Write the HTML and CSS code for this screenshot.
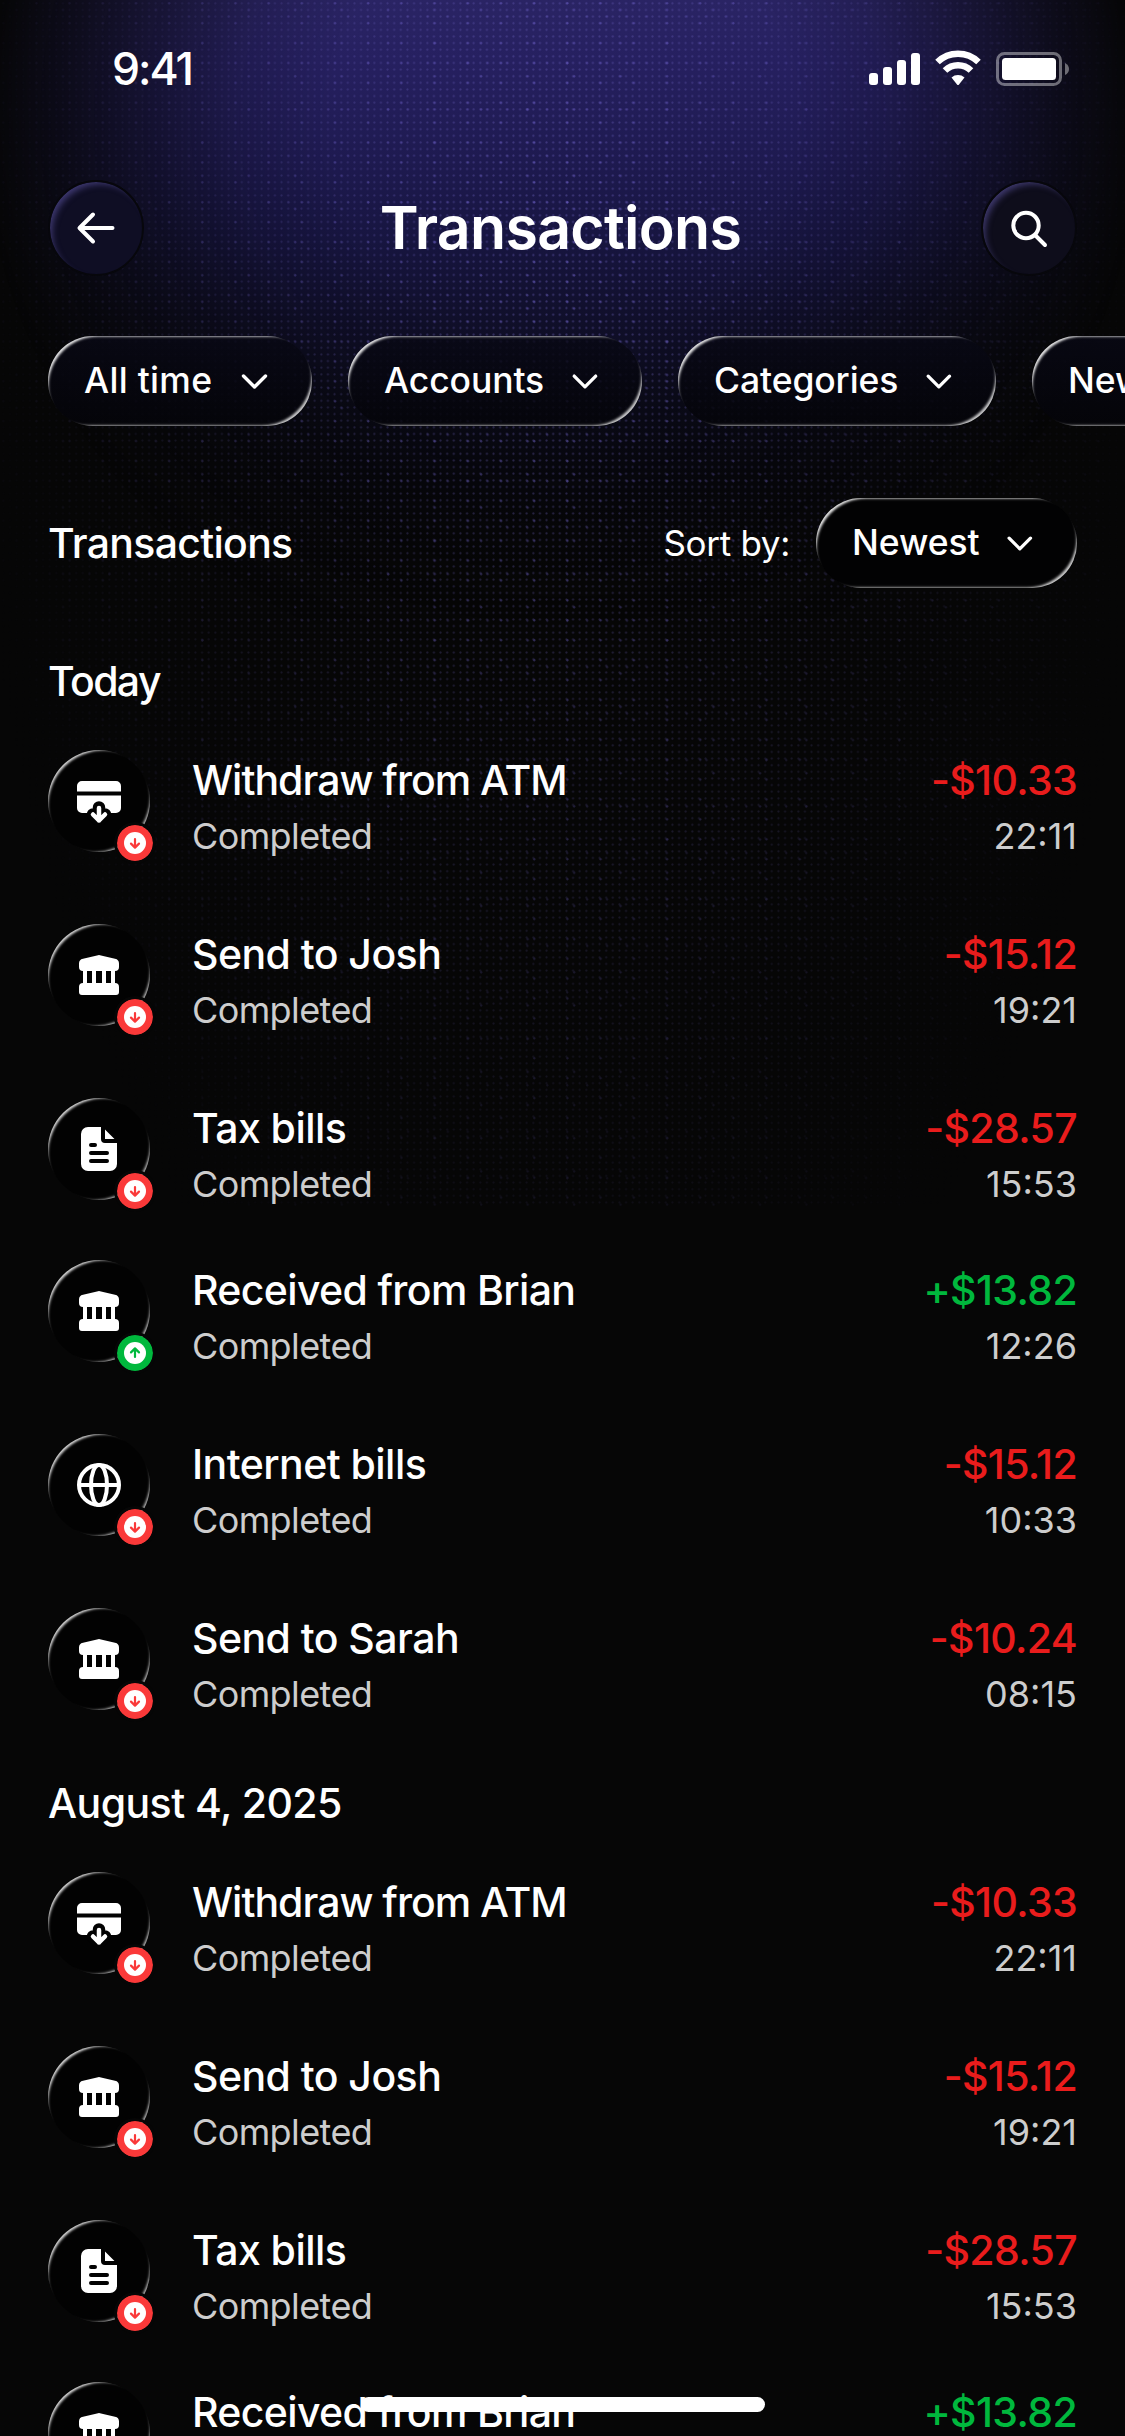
FILE: index.html
```html
<!DOCTYPE html>
<html lang="en">
<head>
<meta charset="utf-8">
<title>Transactions</title>
<link rel="stylesheet" href="styles.css">
</head>
<body>
<svg class="sprite" aria-hidden="true">
  <symbol id="chevron" viewBox="0 0 48 48"><path d="M12.500 19l11 11 11-11" fill="none" stroke="#fff" stroke-width="3.4" stroke-linecap="round" stroke-linejoin="round"/></symbol>
  <symbol id="atm" viewBox="0 0 48 48"><path fill="#fff" d="M2 14.500V9a5 5 0 0 1 5-5h34a5 5 0 0 1 5 5v5.500zM2 18.500h44V31a5 5 0 0 1-5 5H7a5 5 0 0 1-5-5z"/><g fill="none" stroke-linecap="round" stroke-linejoin="round"><path d="M24 30.500v13M18 37.500l6 6 6-6" stroke="#020202" stroke-width="12.500"/><path d="M24 31v12.500M18 37.500l6 6 6-6" stroke="#fff" stroke-width="4.500"/></g></symbol>
  <symbol id="bank" viewBox="0 0 48 48"><path fill="#fff" d="M22 4.400q2-.6 4 0l14 3.300a5 5 0 0 1 4 5V16a4 4 0 0 1-4 4v12a4 4 0 0 1 4 4v5a3 3 0 0 1-3 3H7a3 3 0 0 1-3-3v-5a4 4 0 0 1 4-4V20a4 4 0 0 1-4-4v-3.300a5 5 0 0 1 4-5zM12 20v12h5V20zm9 0v12h6V20zm10 0v12h5V20z"/></symbol>
  <symbol id="doc" viewBox="0 0 48 48"><path fill="#fff" d="M13 2h13v12a4 4 0 0 0 4 4h12v21a7 7 0 0 1-7 7H13a7 7 0 0 1-7-7V9a7 7 0 0 1 7-7zM30 4.500l9.500 9.500H30z"/><path d="M16 20h4M16 28h16M16 36h16" stroke="#020202" stroke-width="4" stroke-linecap="round"/></symbol>
  <symbol id="globe" viewBox="0 0 48 48"><g fill="none" stroke="#fff" stroke-width="4"><circle cx="24" cy="24" r="20"/><ellipse cx="24" cy="24" rx="8" ry="20"/><path d="M4 24h40"/></g></symbol>
  <symbol id="arrow" viewBox="0 0 36 36"><circle cx="18" cy="18" r="18" fill="currentColor"/><circle cx="18" cy="18" r="11" fill="#fff"/><path d="M18 14v8.500M14 18.600l4 4 4-4" fill="none" stroke="currentColor" stroke-width="2.200" stroke-linecap="round" stroke-linejoin="round"/></symbol>
</svg>
<main class="screen">
  <header class="status">
    <span class="time">9:41</span>
    <svg class="status-icons" width="202" height="40" viewBox="0 0 202 40">
      <g fill="#fff"><rect x="0" y="24" width="9" height="12" rx="3"/><rect x="14" y="18" width="9" height="18" rx="3"/><rect x="28" y="11" width="9" height="25" rx="3"/><rect x="42" y="4" width="9" height="32" rx="3"/></g>
      <g fill="none" stroke="#fff" stroke-width="6.500"><path d="M68.500 13a29.500 29.500 0 0 1 41 0"/><path d="M76 21.500a18.500 18.500 0 0 1 26 0"/></g>
      <path fill="#fff" d="M82.500 28.500a10 10 0 0 1 13 0l-5.500 7q-1 1-2 0z"/>
      <rect x="128.500" y="4.500" width="63" height="31" rx="7" fill="none" stroke="#fff" stroke-opacity=".4" stroke-width="3"/>
      <rect x="133" y="9" width="54" height="22" rx="3.500" fill="#fff"/>
      <path d="M196 14q4 2 4 6t-4 6z" fill="#fff" fill-opacity=".4"/>
    </svg>
  </header>
  <nav class="topbar">
    <button class="round" aria-label="Back"><svg width="48" height="48" viewBox="0 0 48 48"><path d="M40.500 24H8M21 10.500L7.500 24 21 37.500" fill="none" stroke="#fff" stroke-width="4" stroke-linecap="round" stroke-linejoin="round"/></svg></button>
    <h1 class="title">Transactions</h1>
    <button class="round" aria-label="Search"><svg width="48" height="48" viewBox="0 0 48 48"><g fill="none" stroke="#fff" stroke-width="4" stroke-linecap="round"><circle cx="21" cy="21.500" r="12.700"/><path d="M30.500 31.500l9.500 9.500"/></g></svg></button>
  </nav>
  <div class="filters">
    <button class="chip"><span class="lbl-all">All time</span><svg width="48" height="48"><use href="#chevron"/></svg></button>
    <button class="chip"><span class="lbl-acc">Accounts</span><svg width="48" height="48"><use href="#chevron"/></svg></button>
    <button class="chip"><span class="lbl-cat">Categories</span><svg width="48" height="48"><use href="#chevron"/></svg></button>
    <button class="chip"><span class="lbl-new">Newest</span><svg width="48" height="48"><use href="#chevron"/></svg></button>
  </div>
  <div class="sortbar">
    <h2 class="heading">Transactions</h2>
    <span class="sortby">Sort by:</span>
    <button class="chip"><span class="lbl-new">Newest</span><svg width="48" height="48"><use href="#chevron"/></svg></button>
  </div>
  <section class="day">
    <h2 class="heading today">Today</h2>
    <ul class="list">
      <li class="row"><span class="avatar"><svg class="glyph"><use href="#atm"/></svg><svg class="badge"><use href="#arrow"/></svg></span><span class="name atm">Withdraw from ATM<small>Completed</small></span><span class="amount">-$10.33<small>22:11</small></span></li>
      <li class="row"><span class="avatar"><svg class="glyph"><use href="#bank"/></svg><svg class="badge"><use href="#arrow"/></svg></span><span class="name">Send to Josh<small>Completed</small></span><span class="amount">-$15.12<small>19:21</small></span></li>
      <li class="row tight"><span class="avatar"><svg class="glyph"><use href="#doc"/></svg><svg class="badge"><use href="#arrow"/></svg></span><span class="name">Tax bills<small>Completed</small></span><span class="amount">-$28.57<small>15:53</small></span></li>
      <li class="row in"><span class="avatar"><svg class="glyph"><use href="#bank"/></svg><svg class="badge"><use href="#arrow"/></svg></span><span class="name">Received from Brian<small>Completed</small></span><span class="amount">+$13.82<small>12:26</small></span></li>
      <li class="row"><span class="avatar"><svg class="glyph"><use href="#globe"/></svg><svg class="badge"><use href="#arrow"/></svg></span><span class="name">Internet bills<small>Completed</small></span><span class="amount">-$15.12<small>10:33</small></span></li>
      <li class="row last"><span class="avatar"><svg class="glyph"><use href="#bank"/></svg><svg class="badge"><use href="#arrow"/></svg></span><span class="name">Send to Sarah<small>Completed</small></span><span class="amount">-$10.24<small>08:15</small></span></li>
    </ul>
  </section>
  <section class="day">
    <h2 class="heading date">August 4, 2025</h2>
    <ul class="list">
      <li class="row"><span class="avatar"><svg class="glyph"><use href="#atm"/></svg><svg class="badge"><use href="#arrow"/></svg></span><span class="name atm">Withdraw from ATM<small>Completed</small></span><span class="amount">-$10.33<small>22:11</small></span></li>
      <li class="row"><span class="avatar"><svg class="glyph"><use href="#bank"/></svg><svg class="badge"><use href="#arrow"/></svg></span><span class="name">Send to Josh<small>Completed</small></span><span class="amount">-$15.12<small>19:21</small></span></li>
      <li class="row tight"><span class="avatar"><svg class="glyph"><use href="#doc"/></svg><svg class="badge"><use href="#arrow"/></svg></span><span class="name">Tax bills<small>Completed</small></span><span class="amount">-$28.57<small>15:53</small></span></li>
      <li class="row in"><span class="avatar"><svg class="glyph"><use href="#bank"/></svg><svg class="badge"><use href="#arrow"/></svg></span><span class="name">Received from Brian</span><span class="amount">+$13.82</span></li>
    </ul>
  </section>
  <div class="home"></div>
</main>
</body>
</html>
```
FILE: styles.css
```css
* { box-sizing: border-box; margin: 0; padding: 0; }
body { background: #060606; }
button { border: 0; background: none; color: inherit; font: inherit; }
svg { display: block; }
.sprite { position: absolute; width: 0; height: 0; }

.screen {
  position: relative;
  isolation: isolate;
  width: 1125px;
  height: 2436px;
  overflow: hidden;
  color: #fff;
  font-family: Inter, "Liberation Sans", sans-serif;
  background: #060606;
}
/* violet glow, held inside the screen's side edges */
.screen::after {
  content: "";
  position: absolute;
  z-index: -2;
  inset: 0 0 auto;
  height: 620px;
  background: linear-gradient(#2a2464 0, #262060 60px, #1e1a50 160px, #171540 240px, #100f2a 320px, #0b0b1a 400px, #07070f 480px, #060606 600px);
  -webkit-mask-image: radial-gradient(ellipse 580px 560px at 562px 120px, #000 0%, #000 40%, rgba(0, 0, 0, .85) 55%, rgba(0, 0, 0, .55) 70%, rgba(0, 0, 0, .25) 85%, transparent 100%);
  mask-image: radial-gradient(ellipse 580px 560px at 562px 120px, #000 0%, #000 40%, rgba(0, 0, 0, .85) 55%, rgba(0, 0, 0, .55) 70%, rgba(0, 0, 0, .25) 85%, transparent 100%);
}
/* dotted texture: an even grid plus sparser, brighter dots on the same pitch */
.screen::before {
  content: "";
  position: absolute;
  z-index: -1;
  inset: 0 0 auto;
  height: 1206px;
  background:
    radial-gradient(circle at 3.300px 3.300px, rgba(125, 110, 225, .75) 0, rgba(125, 110, 225, .6) .8px, transparent 1.600px) 0 0 / 33.200px 19.920px,
    radial-gradient(circle at 3.300px 3.300px, rgba(125, 110, 225, .6) 0, rgba(125, 110, 225, .5) .8px, transparent 1.600px) 13.280px 6.640px / 46.480px 33.200px,
    radial-gradient(circle at 3.300px 3.300px, rgba(125, 110, 225, .5) 0, rgba(125, 110, 225, .4) .8px, transparent 1.600px) 6.640px 13.280px / 19.920px 46.480px,
    radial-gradient(circle at 3.300px 3.300px, rgba(120, 108, 205, .5) 0, rgba(120, 108, 205, .4) .8px, transparent 1.500px) 0 0 / 6.640px 6.640px;
  -webkit-mask-image: radial-gradient(ellipse 600px 1250px at 562px 250px, rgba(0, 0, 0, .8) 0%, rgba(0, 0, 0, .5) 35%, rgba(0, 0, 0, .22) 70%, transparent 100%);
  mask-image: radial-gradient(ellipse 600px 1250px at 562px 250px, rgba(0, 0, 0, .8) 0%, rgba(0, 0, 0, .5) 35%, rgba(0, 0, 0, .22) 70%, transparent 100%);
}

.status { display: flex; justify-content: space-between; align-items: center; height: 137px; padding: 0 54px 0 112px; }
.time { font-size: 44.500px; font-weight: 550; letter-spacing: -2px; }

.topbar { display: flex; justify-content: space-between; align-items: center; height: 181px; padding: 0 48px; }
.round {
  display: grid;
  place-items: center;
  width: 96px;
  height: 96px;
  border-radius: 50%;
  border: 2px solid #07070c;
  background: #0f0e24;
  box-shadow: inset 5px 5px 6px -3px rgba(110, 100, 190, .5);
}
.round:last-child { background: #0e0d1b; }
.title { margin-right: 4px; font-size: 59px; font-weight: 600; letter-spacing: -.7px; line-height: 1; }

.filters { display: flex; gap: 36px; padding: 18px 0 0 48px; }
.chip {
  position: relative;
  flex: none;
  display: flex;
  align-items: center;
  gap: 18px;
  height: 90px;
  padding: 0 33px 0 36px;
  border-radius: 45px;
  background: linear-gradient(rgba(8, 8, 20, .85), rgba(4, 4, 9, .85));
  font-size: 35.500px;
  font-weight: 500;
  letter-spacing: -.1px;
  white-space: nowrap;
}
.chip svg { margin-left: auto; }
.chip span { position: relative; padding-bottom: 1px; }
.filters .chip:nth-child(1) { width: 264px; }
.filters .chip:nth-child(2) { width: 294px; }
.filters .chip:nth-child(3) { width: 318px; }
.lbl-all { letter-spacing: .3px; }
.chip::before, .avatar::before {
  content: "";
  position: absolute;
  inset: 0;
  border-radius: inherit;
  box-shadow: inset 5px 5px 2.500px -4.500px rgba(255, 255, 255, .9), inset -5px -5px 2.500px -4.500px rgba(255, 255, 255, .8);
}
.avatar::before { box-shadow: inset 5px 5px 2.500px -4.800px rgba(255, 255, 255, .85), inset -5px -5px 2.500px -5px rgba(255, 255, 255, .7); }

.sortbar { display: flex; align-items: center; margin-top: 72px; padding: 0 48px; height: 90px; }
.sortbar .chip { width: 261px; background: #020203; }
.heading { font-size: 41px; font-weight: 500; letter-spacing: -.7px; line-height: 60px; }
.today { letter-spacing: -1.600px; }
.date { letter-spacing: -.550px; }
.sortby { margin-left: auto; margin-right: 26px; font-size: 35px; letter-spacing: -.3px; }

.day { padding: 0 48px; }
.day:nth-of-type(1) { padding-top: 63px; }
.day .heading { padding-bottom: 39px; }
.list { list-style: none; display: flex; flex-direction: column; }
.row { display: flex; align-items: flex-start; height: 174px; }
.row.tight { height: 162px; }
.row.last { height: 165px; }
.avatar {
  position: relative;
  flex: none;
  display: grid;
  place-items: center;
  width: 102px;
  height: 102px;
  border-radius: 50%;
  background: #020202;
}
.glyph { width: 48px; height: 48px; }
.badge {
  position: absolute;
  left: 69px;
  top: 75px;
  width: 36px;
  height: 36px;
  border-radius: 50%;
  color: #fa3939;
  box-shadow: 0 0 0 3px #060606;
}
.in .badge { color: #00b83d; transform: rotate(180deg); }
.name, .amount { display: flex; flex-direction: column; font-size: 41px; font-weight: 500; line-height: 60px; letter-spacing: -.550px; white-space: nowrap; }
.name { margin-left: 42px; }
.name.atm { letter-spacing: -1px; }
.in .name { letter-spacing: -.650px; }
.amount { margin-left: auto; text-align: right; color: #e91c1c; letter-spacing: -.650px; }
.in .amount { color: #00b83d; }
.row small { font-size: 36px; font-weight: 400; line-height: 52px; letter-spacing: 0; color: #cdcdcd; }
.name small { letter-spacing: -.600px; }

.home { position: absolute; left: 361px; top: 2397px; width: 404px; height: 15px; border-radius: 8px; background: #fff; }
```
